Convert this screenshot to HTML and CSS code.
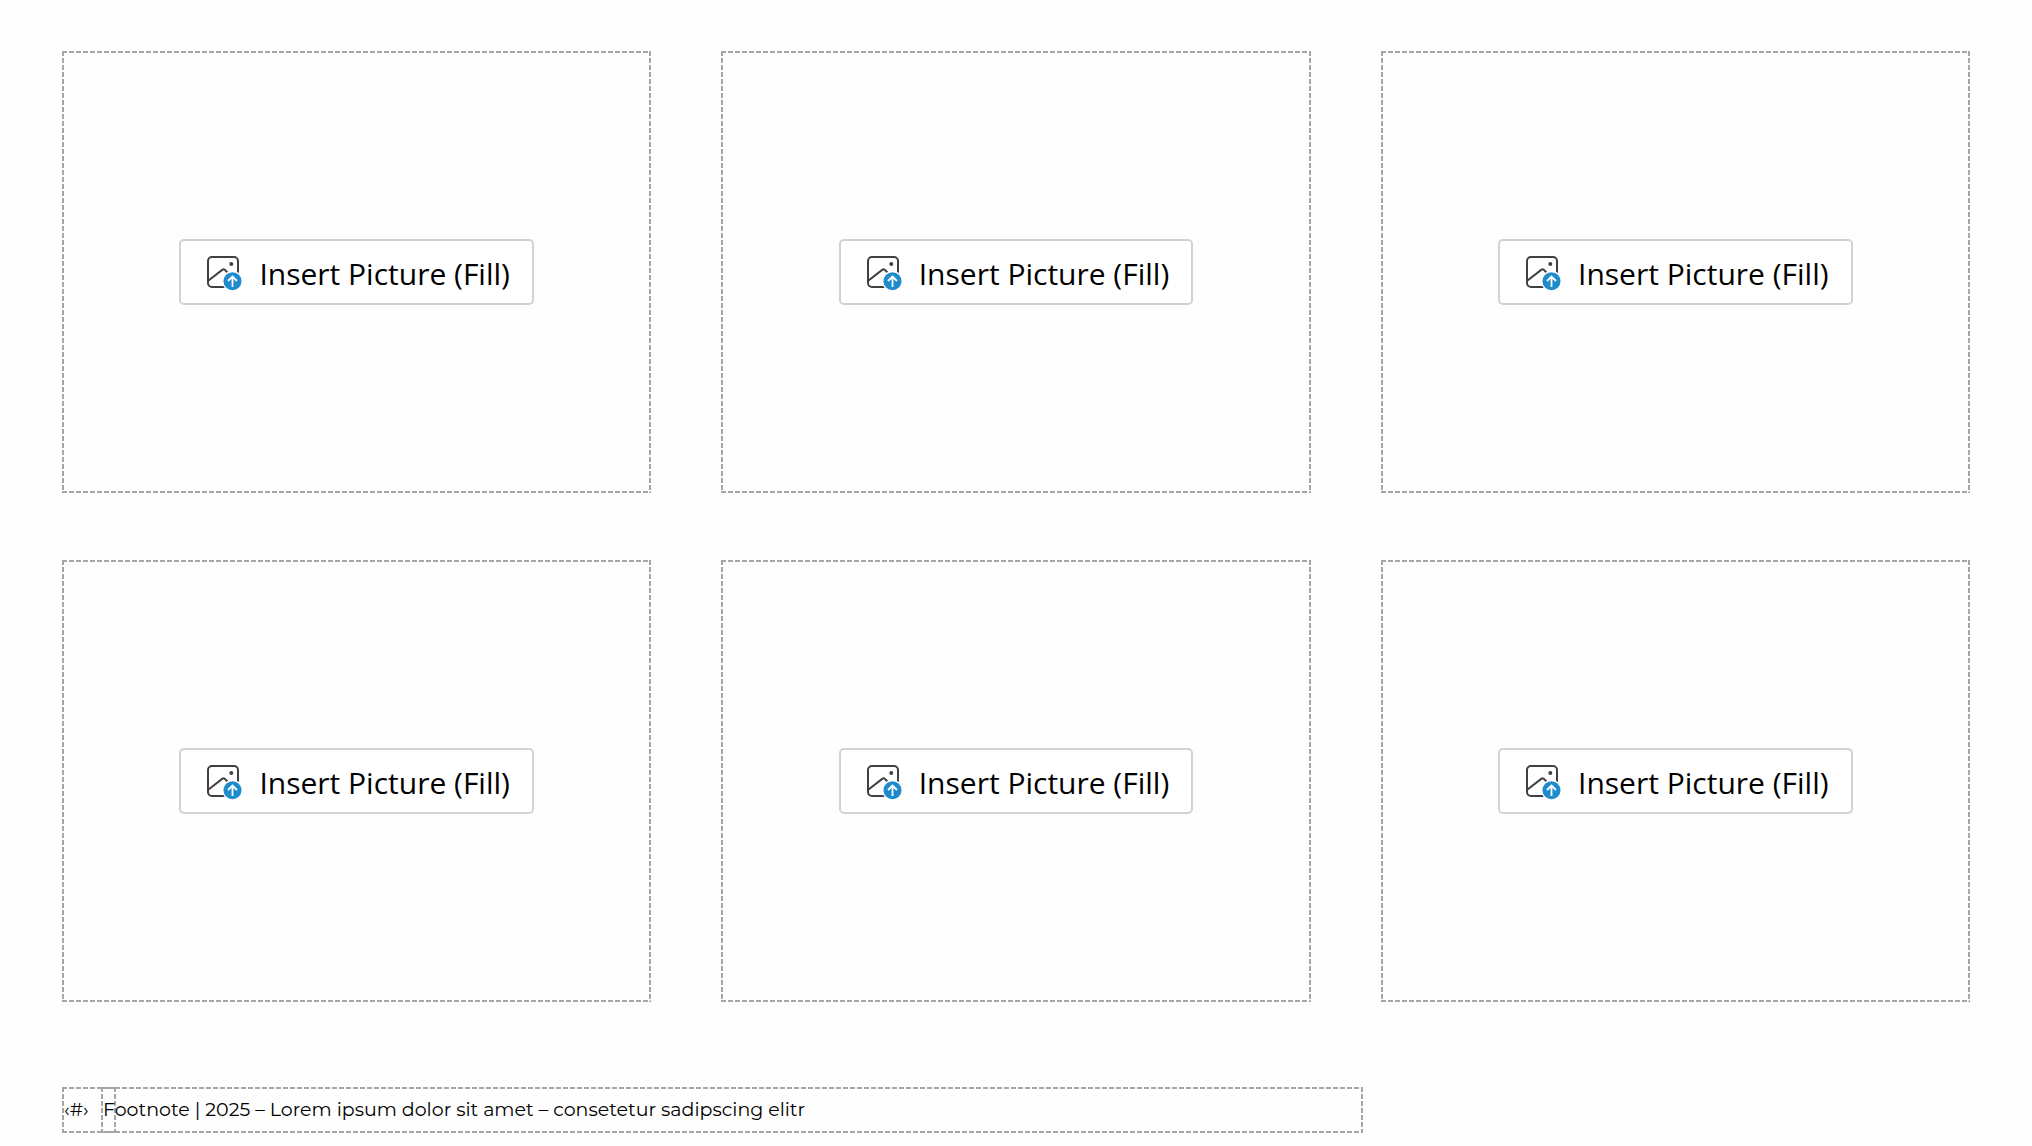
FILE: index.html
```html
<!DOCTYPE html>
<html lang="en">

  <head>
    <meta charset="UTF-8">
    <meta name="viewport" content="width=device-width, initial-scale=1.0">
    <title>Picture Layout</title>
    <link rel="stylesheet" href="styles.css">
  </head>

  <body>

    <!-- icon shared by all placeholder buttons -->
    <svg class="sprite" aria-hidden="true">
      <symbol id="icon-picture" viewBox="0 0 36 36">
        <rect x="1" y="1" width="30" height="30" rx="4" fill="#fff" stroke="#404040" stroke-width="2"/>
        <path d="M1.5 24.5 L15.5 13.6 Q16.5 13 17.5 13.6 L21 17" fill="none" stroke="#404040" stroke-width="2"/>
        <circle cx="24.3" cy="8" r="2" fill="#404040"/>
        <circle cx="25.5" cy="25.2" r="10.5" fill="#fff"/>
        <circle cx="25.5" cy="25.2" r="9" fill="#1e8bcd"/>
        <path d="M25.5 31 V20.5 M21 25 L25.5 20.5 L30 25" fill="none" stroke="#fff" stroke-width="1.8"/>
      </symbol>
    </svg>

    <main class="grid">
      <div class="placeholder dashed">
        <button type="button" class="insert-btn"><svg class="icon" aria-hidden="true"><use href="#icon-picture"/></svg>Insert Picture (Fill)</button>
      </div>
      <div class="placeholder dashed">
        <button type="button" class="insert-btn"><svg class="icon" aria-hidden="true"><use href="#icon-picture"/></svg>Insert Picture (Fill)</button>
      </div>
      <div class="placeholder dashed">
        <button type="button" class="insert-btn"><svg class="icon" aria-hidden="true"><use href="#icon-picture"/></svg>Insert Picture (Fill)</button>
      </div>
      <div class="placeholder dashed">
        <button type="button" class="insert-btn"><svg class="icon" aria-hidden="true"><use href="#icon-picture"/></svg>Insert Picture (Fill)</button>
      </div>
      <div class="placeholder dashed">
        <button type="button" class="insert-btn"><svg class="icon" aria-hidden="true"><use href="#icon-picture"/></svg>Insert Picture (Fill)</button>
      </div>
      <div class="placeholder dashed">
        <button type="button" class="insert-btn"><svg class="icon" aria-hidden="true"><use href="#icon-picture"/></svg>Insert Picture (Fill)</button>
      </div>
    </main>

    <footer class="footer">
      <div class="page-number dashed">‹#›</div>
      <div class="footnote dashed">Footnote | 2025 – Lorem ipsum dolor sit amet – consetetur sadipscing elitr</div>
    </footer>

  </body>

</html>
```

FILE: styles.css
```css
* {
  box-sizing: border-box;
}

body {
  margin: 0;
  padding: 51px 62px 13px;
  min-height: 100vh;
  display: flex;
  flex-direction: column;
  gap: 85px;
  background-color: #fefefe;
  color: #000;
  font-family: 'Open Sans', 'Noto Sans', sans-serif;
}

.sprite {
  display: none;
}

/* 5px dash, 2px gap on all four sides */
.dashed {
  --x: repeating-linear-gradient(to right, #a6a6a6 0 5px, transparent 5px 7px);
  --y: repeating-linear-gradient(to bottom, #a6a6a6 0 5px, transparent 5px 7px);
  background-image: var(--x), var(--x), var(--y), var(--y);
  background-position: top, bottom, left, right;
  background-size: 100% 2px, 100% 2px, 2px 100%, 2px 100%;
  background-repeat: no-repeat;
}

.grid {
  flex: 1;
  display: grid;
  grid-template-columns: repeat(3, 1fr);
  grid-auto-rows: 1fr;
  gap: 67px 70px;
}

.placeholder {
  display: flex;
  align-items: center;
  justify-content: center;
}

.insert-btn {
  display: flex;
  align-items: center;
  gap: 16px;
  height: 66px;
  padding: 3px 22px 0 26px;
  border: 2px solid #d2d2d2;
  border-radius: 5px;
  background-color: #fff;
  color: #000;
  font-family: 'Open Sans', 'Noto Sans', sans-serif;
  font-size: 30px;
  line-height: 40px;
  white-space: nowrap;
  cursor: pointer;
}

.insert-btn:hover {
  background-color: #f5f5f5;
}

.icon {
  width: 36px;
  height: 36px;
}

.footer {
  display: flex;
  width: 68.2%;
  font-family: Montserrat, Inter, sans-serif;
  font-size: 19px;
  line-height: 46px;
}

.page-number {
  width: 54px;
  padding-left: 2px;
}

/* overlaps the right end of the page number box */
.footnote {
  flex: 1;
  margin-left: -15px;
  padding-left: 2px;
}
```
